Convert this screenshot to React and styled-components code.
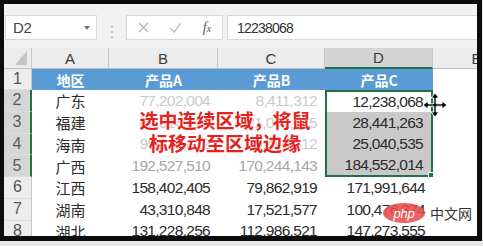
import React from 'react';
import styled, { createGlobalStyle } from 'styled-components';

const GlobalStyle = createGlobalStyle`
  html, body {
    margin: 0;
    padding: 0;
    background: #e6e6e6;
  }
  body {
    font-family: "Liberation Sans", "Noto Sans CJK SC", sans-serif;
  }
`;

const Page = styled.div`
  width: 483px;
  height: 246px;
  overflow: hidden;
  background: #e6e6e6;
`;

const Frame = styled.div`
  width: 473px;
  height: 232px;
  border-style: solid;
  border-color: #0c0c0c;
  border-width: 4px 5px 5px 4px;
  background: #f2f2f2;
  overflow: hidden;
  display: flex;
  flex-direction: column;
`;

const FormulaBar = styled.div`
  height: 44px;
  flex: none;
  display: flex;
  align-items: flex-start;
  padding: 11px 0 0 1px;
  box-sizing: border-box;
`;

const NameBox = styled.div`
  width: 92px;
  height: 25px;
  box-sizing: border-box;
  background: #fff;
  border: 1px solid #d9d9d9;
  display: flex;
  align-items: center;
  justify-content: space-between;
  padding: 0 6px 0 7px;
  font-size: 15px;
  letter-spacing: -0.3px;
  color: #444;
`;

const DropArrow = styled.span`
  width: 0;
  height: 0;
  border-left: 3px solid transparent;
  border-right: 3px solid transparent;
  border-top: 4px solid #777;
`;

const Grip = styled.div`
  width: 2px;
  margin: 0 13px 0 14px;
  align-self: center;
  display: flex;
  flex-direction: column;
  gap: 3px;

  span {
    width: 2px;
    height: 2px;
    background: #bdbdbd;
  }
`;

const FnBox = styled.div`
  width: 97px;
  height: 25px;
  box-sizing: border-box;
  background: #fff;
  border: 1px solid #d9d9d9;
  display: grid;
  grid-template-columns: 32px 33px 1fr;
  align-items: center;
  justify-items: center;
`;

const FxLabel = styled.span`
  font-family: "Liberation Serif", serif;
  font-style: italic;
  font-size: 14px;
  color: #555;

  small {
    font-size: 10px;
  }
`;

const FormulaInput = styled.div`
  flex: 1;
  height: 25px;
  margin-left: 4px;
  box-sizing: border-box;
  background: #fff;
  border: 1px solid #d9d9d9;
  border-right: none;
  display: flex;
  align-items: center;
  padding-left: 9px;
  font-size: 14px;
  letter-spacing: -0.8px;
  color: #333;
`;

const Sheet = styled.div`
  position: relative;
  flex: 1;
  background: #fff;
`;

const Grid = styled.div`
  display: grid;
  grid-template-columns: 28px 77px 109px 107px 108px 88px;
  grid-template-rows: 21px 21px repeat(7, 21.75px);
`;

const Corner = styled.div`
  background: #ececec;
  border-right: 1px solid #c8c8c8;
  border-bottom: 1px solid #c0c0c0;
  box-sizing: border-box;
  display: flex;
  align-items: flex-end;
  justify-content: flex-end;
  padding: 0 4px 3px 0;
`;

const ColHead = styled.div`
  box-sizing: border-box;
  background: ${(p) => (p.$active ? '#d4d4d4' : '#ececec')};
  border-right: 1px solid #c8c8c8;
  border-bottom: ${(p) => (p.$active ? '2px solid #217346' : '1px solid #c0c0c0')};
  display: flex;
  align-items: center;
  justify-content: center;
  font-size: 15px;
  color: #3c3c3c;
`;

const RowHead = styled.div`
  box-sizing: border-box;
  background: ${(p) => (p.$active ? '#d6d6d6' : '#ececec')};
  border-right: ${(p) => (p.$active ? '2px solid #217346' : '1px solid #c8c8c8')};
  border-bottom: 1px solid #dcdcdc;
  display: flex;
  align-items: center;
  justify-content: center;
  font-size: 16px;
  color: ${(p) => (p.$active ? '#4f6457' : '#555')};
`;

const tones = {
  normal: '#2b2b2b',
  faded: '#cbcbcb',
  dim: '#a6a6a6',
};

const Cell = styled.div`
  position: relative;
  box-sizing: border-box;
  display: flex;
  align-items: center;
  justify-content: ${(p) => (p.$align === 'right' ? 'flex-end' : 'center')};
  padding-right: ${(p) => (p.$align === 'right' ? '8px' : '0')};
  background: ${(p) => (p.$head ? '#5b9bd5' : p.$shade ? '#c9c9c9' : '#fff')};
  color: ${(p) => (p.$head ? '#fff' : tones[p.$tone || 'normal'])};
  font-weight: ${(p) => (p.$head ? 'bold' : 'normal')};
  font-size: ${(p) => (p.$cjk ? '15px' : '15.5px')};
  letter-spacing: ${(p) => (p.$cjk ? '0' : '-0.7px')};
  font-family: ${(p) =>
    p.$cjk ? '"Noto Sans CJK SC", sans-serif' : '"Liberation Sans", sans-serif'};
  ${(p) => p.$head && 'font-size: 14px; font-family: "Noto Sans CJK SC", sans-serif; letter-spacing: 0;'}
  border-style: solid;
  border-color: #217346;
  border-width: ${(p) => p.$sel || '0'};
`;

const FillHandle = styled.span`
  position: absolute;
  right: -4px;
  bottom: -4px;
  width: 5px;
  height: 5px;
  background: #217346;
  border: 1px solid #fff;
`;

const Callout = styled.div`
  position: absolute;
  left: 111px;
  top: 60px;
  width: 220px;
  text-align: center;
  font-family: "Noto Sans CJK SC", sans-serif;
  font-weight: bold;
  font-size: 19px;
  line-height: 23px;
  color: #e5221b;
  text-shadow: 0 0 2px #fff, 0 0 2px #fff;
`;

const MoveCursor = styled.svg`
  position: absolute;
  left: 417px;
  top: 43px;
`;

const Watermark = styled.div`
  position: absolute;
  left: 379px;
  top: 155px;
  display: flex;
  align-items: center;
  gap: 5px;
`;

const PhpBadge = styled.span`
  width: 42px;
  height: 20px;
  border-radius: 50%;
  background: rgba(232, 76, 76, 0.88);
  color: #fff;
  font-family: "Liberation Sans", sans-serif;
  font-style: italic;
  font-size: 13px;
  display: flex;
  align-items: center;
  justify-content: center;
  letter-spacing: -0.3px;
`;

const SiteName = styled.span`
  font-family: "Noto Sans CJK SC", sans-serif;
  font-size: 14px;
  color: #333;
`;

const rows = [
  ['广东', '77,202,004', '8,411,312', '12,238,068'],
  ['福建', '69,314,212', '21,007,175', '28,441,263'],
  ['海南', '95,318,812', '15,480,312', '25,040,535'],
  ['广西', '192,527,510', '170,244,143', '184,552,014'],
  ['江西', '158,402,405', '79,862,919', '171,991,644'],
  ['湖南', '43,310,848', '17,521,577', '100,476,374'],
  ['湖北', '131,228,256', '112,986,521', '147,273,555'],
];

const toneFor = (i) => (i < 3 ? 'faded' : i === 3 ? 'dim' : 'normal');

const selBorder = (i) => {
  if (i === 0) return '2px 2px 0 2px';
  if (i === 3) return '0 2px 2px 2px';
  if (i < 3) return '0 2px 0 2px';
  return null;
};

export default function App() {
  return (
    <Page>
      <GlobalStyle />
      <Frame>
        <FormulaBar>
          <NameBox>
            D2
            <DropArrow />
          </NameBox>
          <Grip>
            <span />
            <span />
            <span />
          </Grip>
          <FnBox>
            <svg width="11" height="11" viewBox="0 0 11 11">
              <path d="M1 1L10 10M10 1L1 10" stroke="#b5b5b5" strokeWidth="1.3" />
            </svg>
            <svg width="13" height="11" viewBox="0 0 13 11">
              <path d="M1 6L5 10L12 1" stroke="#c2c2c2" strokeWidth="1.5" fill="none" />
            </svg>
            <FxLabel>
              f<small>x</small>
            </FxLabel>
          </FnBox>
          <FormulaInput>12238068</FormulaInput>
        </FormulaBar>

        <Sheet>
          <Grid>
            <Corner>
              <svg width="12" height="14" viewBox="0 0 12 14">
                <polygon points="12,0 12,14 0,14" fill="#c4c4c4" />
              </svg>
            </Corner>
            {['A', 'B', 'C', 'D', 'E'].map((c) => (
              <ColHead key={c} $active={c === 'D'}>
                {c}
              </ColHead>
            ))}

            <RowHead>1</RowHead>
            <Cell $head>地区</Cell>
            <Cell $head>产品A</Cell>
            <Cell $head>产品B</Cell>
            <Cell $head>产品C</Cell>
            <Cell />

            {rows.map((r, i) => (
              <React.Fragment key={r[0]}>
                <RowHead $active={i < 4}>{i + 2}</RowHead>
                <Cell $cjk>{r[0]}</Cell>
                <Cell $align="right" $tone={toneFor(i)}>
                  {r[1]}
                </Cell>
                <Cell $align="right" $tone={toneFor(i)}>
                  {r[2]}
                </Cell>
                <Cell $align="right" $shade={i > 0 && i < 4} $sel={selBorder(i)}>
                  {r[3]}
                  {i === 3 && <FillHandle />}
                </Cell>
                <Cell />
              </React.Fragment>
            ))}
          </Grid>

          <Callout>
            选中连续区域，将鼠
            <br />
            标移动至区域边缘
          </Callout>

          <MoveCursor width="28" height="28" viewBox="0 0 28 28">
            <path
              d="M14 2L18 7H15.2V12.8H21V10L26 14L21 18V15.2H15.2V21H18L14 26L10 21H12.8V15.2H7V18L2 14L7 10V12.8H12.8V7H10Z"
              fill="#000"
              stroke="#fff"
              strokeWidth="1"
              strokeLinejoin="round"
            />
          </MoveCursor>

          <Watermark>
            <PhpBadge>php</PhpBadge>
            <SiteName>中文网</SiteName>
          </Watermark>
        </Sheet>
      </Frame>
    </Page>
  );
}
